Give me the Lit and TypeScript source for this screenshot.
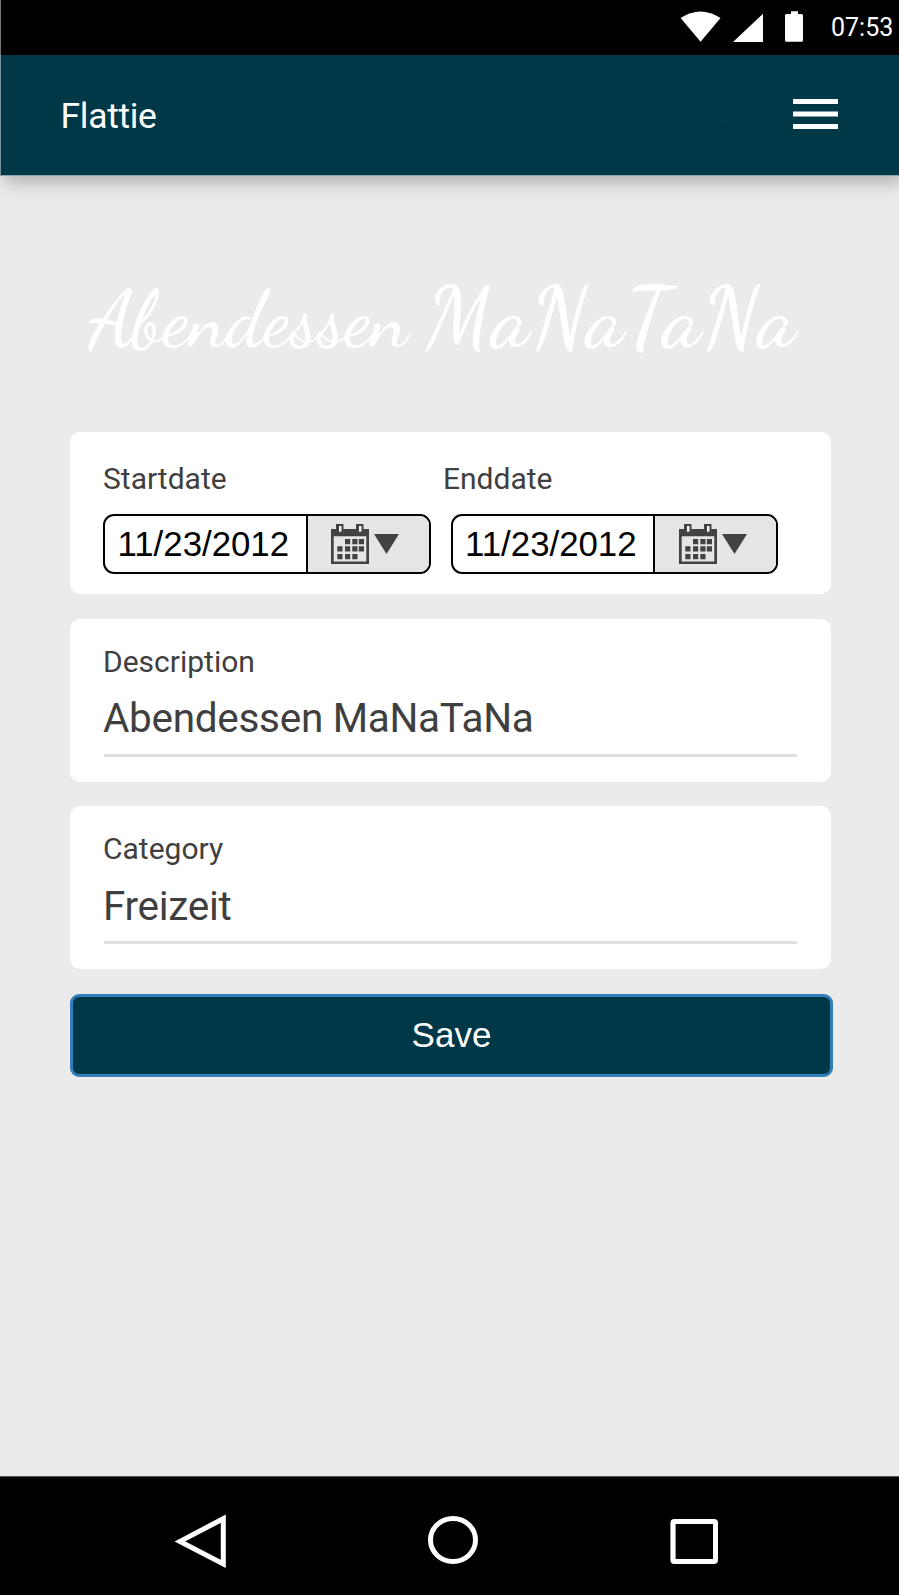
import { LitElement, html, css } from "lit";
import { customElement, property } from "lit/decorators.js";

@customElement("date-field")
class DateField extends LitElement {
  @property() value = "";

  static styles = css`
    :host { display: block; }
    .box {
      display: flex; box-sizing: border-box; width: 327.5px; height: 60px;
      border: 2px solid #000; border-radius: 11px; overflow: hidden; background: #fff;
    }
    .value {
      width: 202.5px; box-sizing: border-box; padding-left: 12.5px;
      border-right: 2px solid #000; flex: none;
      font: 34.8px/56px "Liberation Sans", Arial, sans-serif; color: #000;
    }
    .picker { flex: 1; background: #e5e5e5; padding: 8px 0 0 23.5px; }
    svg { display: block; }
  `;

  render() {
    return html`
      <div class="box">
        <div class="value">${this.value}</div>
        <div class="picker">
          <svg width="69" height="40" viewBox="0 0 69 40">
            <g fill="#424242">
              <path fill-rule="evenodd" d="M0 5H5V0H12.5V5H25V0H32.5V5H38V40H0ZM2.7 12.3V37.6H35.3V12.3ZM8 2V7.5H10.3V2ZM28 2V7.5H30.3V2Z"/>
              <path d="M14 15h5.2v5.2H14zM21.3 15h5.2v5.2h-5.2zM27.8 15H33v5.2h-5.2zM6.3 22.2h5.2v5.2H6.3zM14 22.2h5.2v5.2H14zM21.3 22.2h5.2v5.2h-5.2zM27.8 22.2H33v5.2h-5.2zM6.3 30h5.2v5.2H6.3zM14 30h5.2v5.2H14zM21.3 30h5.2v5.2h-5.2z"/>
              <path d="M43 10H68L55.5 30Z"/>
            </g>
            <path d="M8 2H10.3V7.5H8ZM28 2H30.3V7.5H28Z" fill="#f4f4f4"/>
          </svg>
        </div>
      </div>`;
  }
}

@customElement("text-card")
class TextCard extends LitElement {
  @property() label = "";
  @property() value = "";

  static styles = css`
    :host { display: block; box-sizing: border-box; background: #fff; border-radius: 10px; padding: 25px 34px 0 33px; }
    .label { font-size: 30px; line-height: 36px; }
    .value { font-size: 40.5px; letter-spacing: -.3px; line-height: 48px; margin-top: var(--value-gap, 14px); height: 48px; }
    .rule { height: 2.5px; background: #dfdfdf; margin: var(--rule-gap, 12px) 0 0 1px; }
  `;

  render() {
    return html`
      <div class="label">${this.label}</div>
      <div class="value">${this.value}</div>
      <div class="rule"></div>`;
  }
}

@customElement("app-root")
class AppRoot extends LitElement {
  static styles = css`
    :host {
      display: flex; flex-direction: column; width: 899px; height: 1595px; overflow: hidden;
      background: #ebebeb; color: #3f3f3f; font-family: Roboto, sans-serif;
    }
    svg { display: block; }
    .status {
      flex: none; display: flex; height: 55px; box-sizing: border-box; background: #000; color: #fff;
      border-left: 1px solid #757575; justify-content: flex-end;
    }
    .time { width: 68px; font-size: 25px; line-height: 56px; white-space: nowrap; }
    .bar {
      flex: none; display: flex; justify-content: space-between; height: 121px; box-sizing: border-box;
      background: #003848; border-left: 1px solid #75919a; border-bottom: 1px solid #90a6ad;
      box-shadow: 4px 7px 16px rgba(0, 0, 0, .24); color: #fff; padding-left: 59.5px;
    }
    .brand { font-size: 35.5px; letter-spacing: -.3px; line-height: 123px; }
    .title {
      flex: none; display: flex; align-items: baseline; height: 256px; box-sizing: border-box; padding: 92px 0 0 89px; color: #fff;
      font-family: "Rochester", "Dancing Script", "Liberation Serif", serif; font-weight: 500;
      font-size: 78px; line-height: 100px; white-space: pre;
    }
    .lead { letter-spacing: .2px; }
    .name { font-size: 85px; letter-spacing: 2px; margin-left: -3px; }
    .form { flex: 1; display: flex; flex-direction: column; padding: 0 66px 0 70px; }
    .card { width: 761px; height: 162px; box-sizing: border-box; }
    .dates { display: grid; grid-template-columns: 340px 1fr; background: #fff; border-radius: 10px; padding: 29px 0 0 33px; align-content: start; }
    .label { font-size: 30px; line-height: 36px; }
    .fields { grid-column: 1 / 3; display: flex; gap: 20px; margin-top: 17px; }
    .text { height: 163px; }
    .description { margin-top: 25px; }
    .category { margin-top: 24px; --value-gap: 15px; --rule-gap: 11px; }
    .save {
      margin: 25px 0 0; width: 763px; height: 83px; border: 3px solid #317dbd; border-radius: 9px;
      background: #003848; color: #fff; padding: 0 0 2px; font: 35px/74px "Liberation Sans", Arial, sans-serif;
    }
    .nav { flex: none; height: 119px; box-sizing: border-box; background: #000; border-top: 1px solid #555; }
  `;

  render() {
    return html`
      <div class="status">
        <svg width="151" height="55" viewBox="680 0 151 55" fill="#fff">
          <path d="M680.6 18Q700.5 5 720.5 18L700.6 41.8Z"/>
          <path d="M763 13.8V42H733Z"/>
          <path d="M791 11.3H798V14H801.5Q803 14 803 15.5V40.3Q803 41.8 801.5 41.8H786.5Q785 41.8 785 40.3V15.5Q785 14 786.5 14H791Z"/>
        </svg>
        <div class="time">07:53</div>
      </div>
      <div class="bar">
        <div class="brand">Flattie</div>
        <svg width="199" height="120" viewBox="700 55 199 120">
          <g fill="none" stroke="#003746" stroke-width="2.5"><circle cx="726.5" cy="113.5" r="14"/><path d="M737 124L752 137"/></g>
          <path d="M793 99h45v5h-45zM793 111.4h45v5.1h-45zM793 124h45v5h-45z" fill="#fff"/>
        </svg>
      </div>
      <div class="title"><span class="lead">Abendessen </span><span class="name">MaNaTaNa</span></div>
      <div class="form">
        <div class="card dates">
          <div class="label">Startdate</div>
          <div class="label">Enddate</div>
          <div class="fields">
            <date-field value="11/23/2012"></date-field>
            <date-field value="11/23/2012"></date-field>
          </div>
        </div>
        <text-card class="card text description" label="Description" value="Abendessen MaNaTaNa"></text-card>
        <text-card class="card text category" label="Category" value="Freizeit"></text-card>
        <button class="save">Save</button>
      </div>
      <div class="nav">
        <svg width="899" height="118" viewBox="0 1477 899 118" fill="none" stroke="#fff" stroke-width="5">
          <path d="M180 1541.4L223.3 1518.7V1564Z"/>
          <ellipse cx="453" cy="1540" rx="22.5" ry="21.5"/>
          <path fill="#fff" stroke="none" fill-rule="evenodd" d="M674.4 1519H714Q718 1519 718 1523V1560Q718 1564 714 1564H674.4Q670.4 1564 670.4 1560V1523Q670.4 1519 674.4 1519ZM675.6 1524V1559H713V1524Z"/>
        </svg>
      </div>`;
  }
}
